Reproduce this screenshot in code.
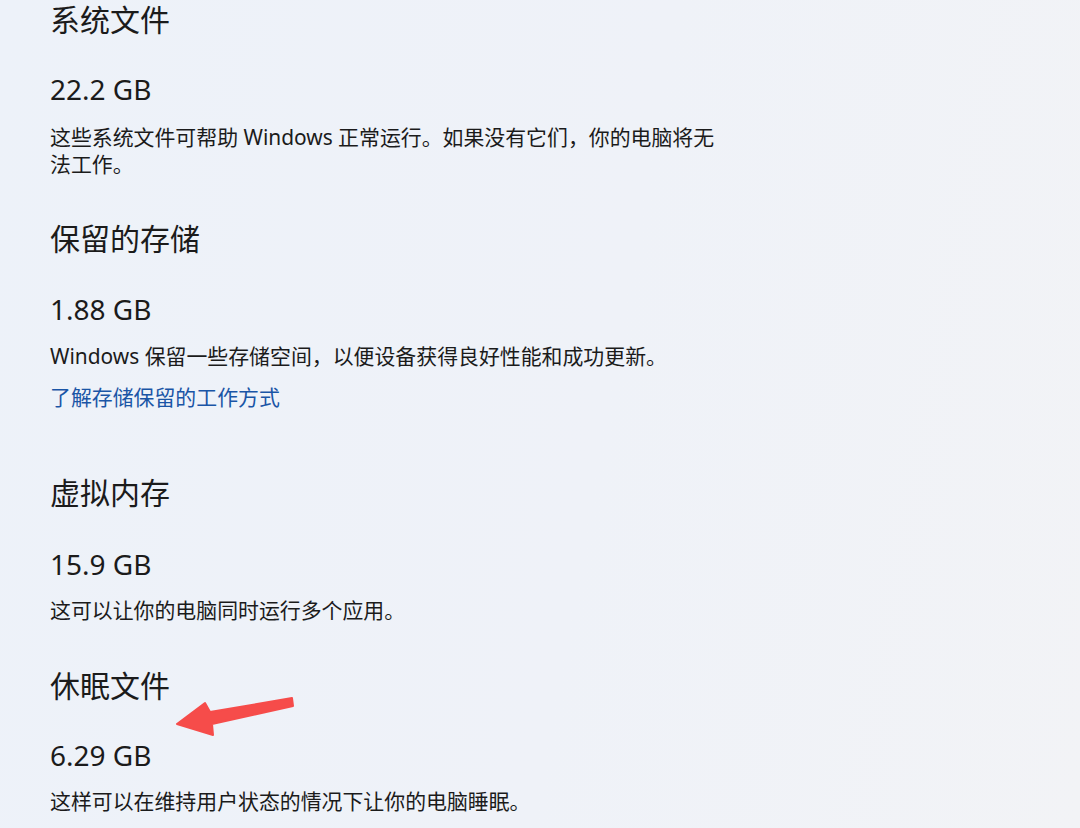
import React from 'react';

const cjk = "font-['Noto_Sans','Noto_Sans_CJK_SC',sans-serif]";

const Heading = ({ children, className = '' }) => (
  <h2 className={`text-[30px] leading-[40px] font-normal text-[#1b1b1b] ${className}`}>{children}</h2>
);

const Size = ({ children, className = '' }) => (
  <div className={`text-[28px] leading-[40px] text-[#1b1b1b] ${className}`}>{children}</div>
);

const Desc = ({ children, className = '' }) => (
  <p className={`text-[20.9px] leading-[27px] text-[#1b1b1b] ${className}`}>{children}</p>
);

const Arrow = () => (
  <svg className="absolute left-0 top-0" width="1080" height="828" viewBox="0 0 1080 828">
    <polygon
      points="292,698 210,712 205,703 177,724 213,735 212,724 293,706"
      fill="#f64c4a"
      stroke="#f64c4a"
      strokeWidth="2"
      strokeLinejoin="round"
    />
  </svg>
);

export default function App() {
  return (
    <div
      className={`relative h-[828px] w-[1080px] overflow-hidden bg-[linear-gradient(100deg,#edf2f9_0%,#eff2f8_55%,#f2f3f6_100%)] ${cjk}`}
    >
      <div className="pl-[50px]">
        {/* 系统文件 */}
        <Heading>系统文件</Heading>
        <Size className="mt-[29px]">22.2 GB</Size>
        <Desc className="mt-[15px] w-[682px]">
          这些系统文件可帮助 Windows 正常运行。如果没有它们，你的电脑将无法工作。
        </Desc>

        {/* 保留的存储 */}
        <Heading className="mt-[41px]">保留的存储</Heading>
        <Size className="mt-[30px]">1.88 GB</Size>
        <Desc className="mt-[13px] leading-[28px]">
          Windows 保留一些存储空间，以便设备获得良好性能和成功更新。
        </Desc>
        <a href="#" className="mt-[13px] block text-[20.9px] leading-[28px] text-[#1a55a6]">
          了解存储保留的工作方式
        </a>

        {/* 虚拟内存 */}
        <Heading className="mt-[62px]">虚拟内存</Heading>
        <Size className="mt-[31px]">15.9 GB</Size>
        <Desc className="mt-[12px] leading-[28px]">这可以让你的电脑同时运行多个应用。</Desc>

        {/* 休眠文件 */}
        <Heading className="mt-[42px]">休眠文件</Heading>
        <Size className="mt-[29px]">6.29 GB</Size>
        <Desc className="mt-[12px] leading-[28px]">这样可以在维持用户状态的情况下让你的电脑睡眠。</Desc>
      </div>

      <Arrow />
    </div>
  );
}
